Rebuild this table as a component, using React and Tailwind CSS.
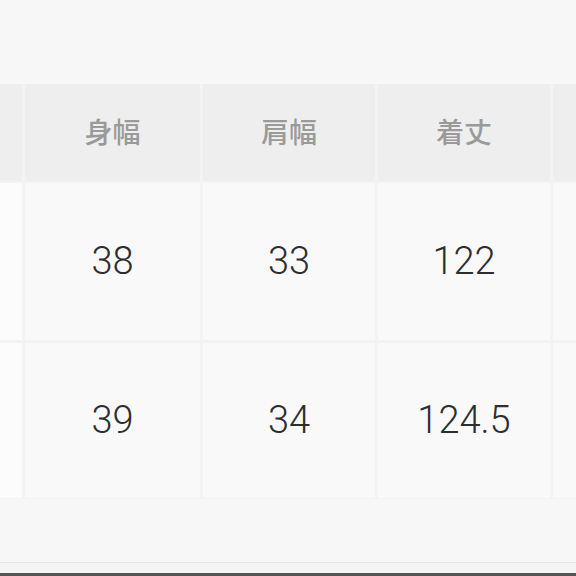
import React from 'react'

const cols = ['身幅', '肩幅', '着丈']
const rows = [
  ['38', '33', '122'],
  ['39', '34', '124.5'],
]

function App() {
  return (
    <div className="w-[576px] h-[576px] bg-[#f7f7f7] flex flex-col overflow-hidden">
      {/* empty top area */}
      <div className="h-[84px] shrink-0" />

      {/* size table */}
      <div className="grid grid-cols-[22px_175px_172px_172px_23px] grid-rows-[97px_159px_158px] gap-x-[3px] bg-[#f3f3f3] shrink-0">
        {/* header row */}
        <div className="bg-[#eeeeee]" />
        {cols.map((c) => (
          <div
            key={c}
            className="bg-[#eeeeee] flex items-center justify-center pb-[4px] text-[28px] font-medium text-[#9a9a9a]"
            style={{ fontFamily: '"Noto Sans CJK JP", "Noto Sans", sans-serif' }}
          >
            {c}
          </div>
        ))}
        <div className="bg-[#eeeeee]" />

        {/* data rows */}
        {rows.map((r, i) => (
          <React.Fragment key={i}>
            <div className={`bg-[#fcfcfc] ${i === 0 ? 'mt-[2px]' : 'mt-[3px]'}`} />
            {r.map((v, j) => (
              <div
                key={j}
                className={`bg-[#f9f9f9] flex items-center justify-center text-[38px] font-light text-[#2e2e2e] ${i === 0 ? 'mt-[2px]' : 'mt-[3px]'}`}
                style={{ fontFamily: 'Roboto, "Liberation Sans", sans-serif' }}
              >
                {v}
              </div>
            ))}
            <div className={`bg-[#f9f9f9] ${i === 0 ? 'mt-[2px]' : 'mt-[3px]'}`} />
          </React.Fragment>
        ))}
      </div>

      {/* bottom area */}
      <div className="flex-1 bg-[#f7f7f7] border-t border-[#f3f3f3]" />
      <div className="h-[11px] shrink-0 bg-[#f4f4f4] border-t border-[#e6e6e6]" />
      <div className="h-[3px] shrink-0 bg-[#555555]" />
    </div>
  )
}

export default App
